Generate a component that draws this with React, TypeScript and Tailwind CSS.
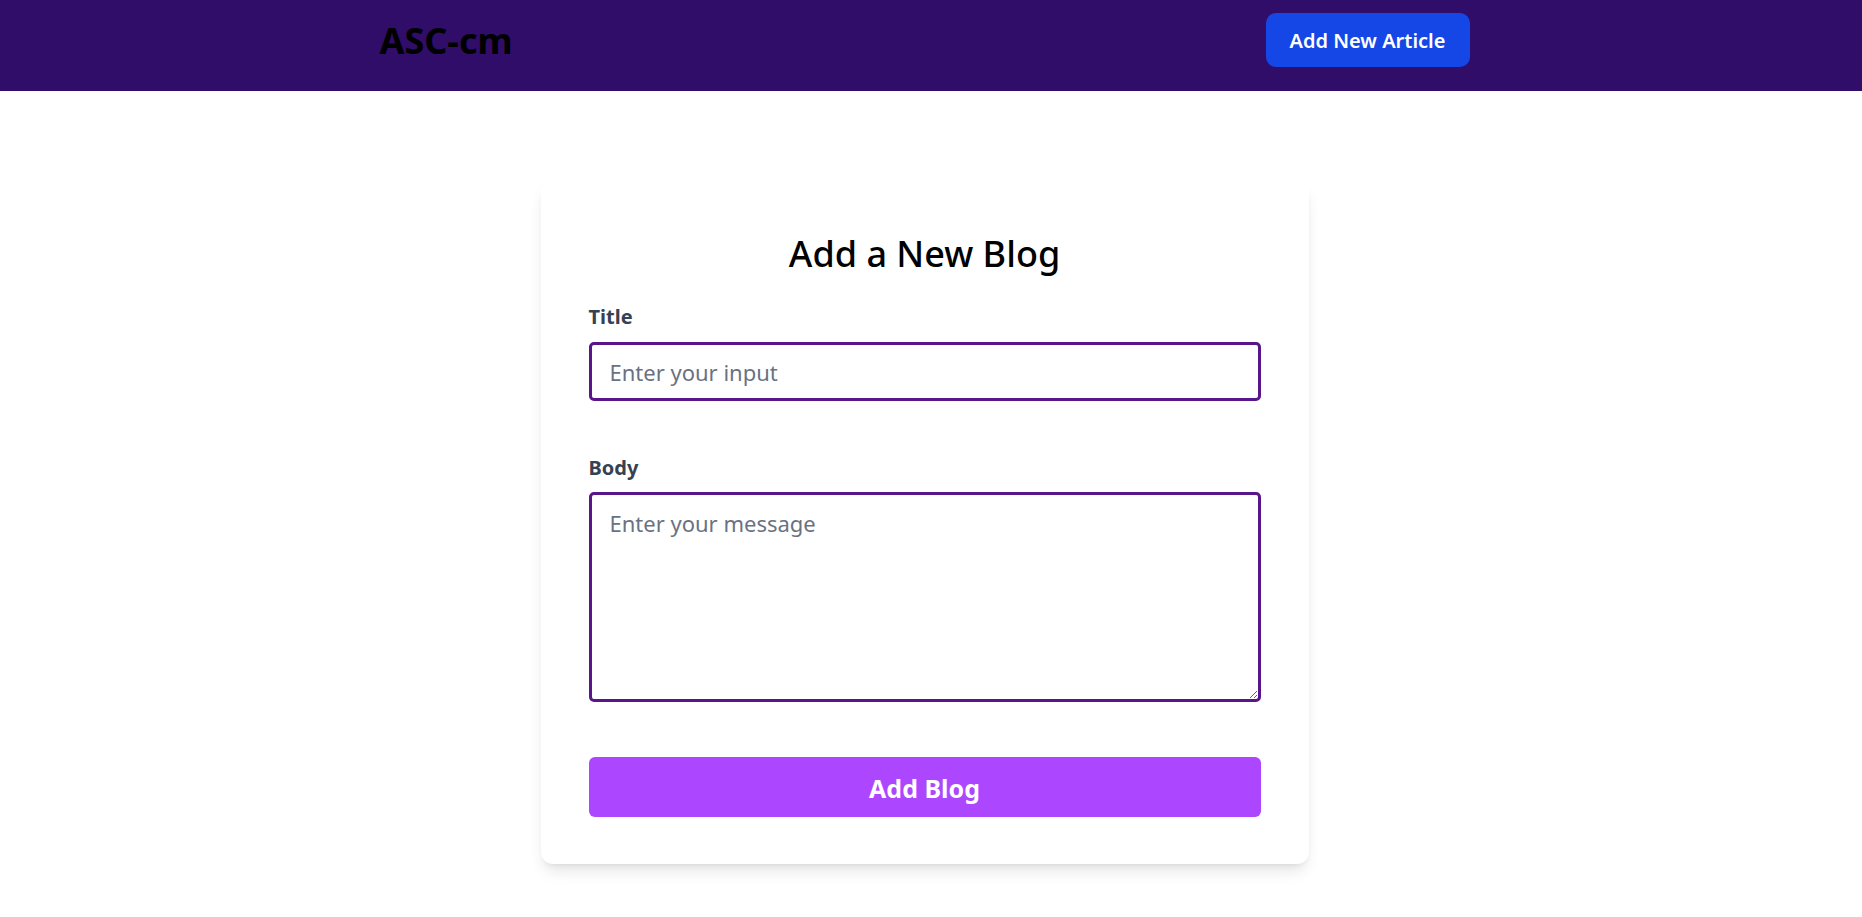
import { useState } from "react";

const Header = () => {
  return (
    <header className="bg-violet-950 h-[91px] pt-[13px] pr-[13px]">
      <div className="mx-auto w-[1090px] h-[54px] flex items-center justify-between">
        <h1 className="text-[36px] leading-[45px] font-bold text-black">ASC-cm</h1>
        <button className="bg-blue-700 text-white font-semibold text-[20px] leading-[30px] pt-[2px] h-[54px] w-[204px] rounded-[10px]">
          Add New Article
        </button>
      </div>
    </header>
  );
};

export default function App() {
  const [title, setTitle] = useState("");
  const [body, setBody] = useState("");

  return (
    <div
      className="bg-white"
      style={{ fontFamily: '"Noto Sans", "Open Sans", sans-serif' }}>
      <Header />
      <main className="pt-[89px] pb-6 pr-[13px]">
        <form
          className="mx-auto w-[768px] bg-white rounded-[12px] shadow-lg px-12 pt-[51px] pb-[47px] flex flex-col"
          onSubmit={(e) => e.preventDefault()}>
          <h2 className="text-center text-[36px] leading-[45px] font-medium text-black mb-[23px]">
            Add a New Blog
          </h2>
          <label className="text-gray-700 font-bold text-[20px] leading-[35px] mb-[8px]">Title</label>
          <input
            value={title}
            onChange={(e) => setTitle(e.target.value)}
            placeholder="Enter your input"
            className="h-[59px] border-[3px] border-purple-900 rounded-[5px] px-[18px] text-[22px] text-black placeholder:text-gray-500 outline-none"
          />
          <label className="text-gray-700 font-bold text-[20px] leading-[35px] mt-[49px] mb-[7px]">
            Body
          </label>
          <textarea
            value={body}
            onChange={(e) => setBody(e.target.value)}
            placeholder="Enter your message"
            className="h-[210px] border-[3px] border-purple-900 rounded-[5px] px-[18px] pt-[12px] pb-[8px] text-[22px] text-black placeholder:text-gray-500 outline-none"
          />
          <button
            type="submit"
            className="mt-[55px] h-[60px] pt-[3px] bg-purple-500 text-white font-bold text-[25px] rounded-[6px]">
            Add Blog
          </button>
        </form>
      </main>
    </div>
  );
}
